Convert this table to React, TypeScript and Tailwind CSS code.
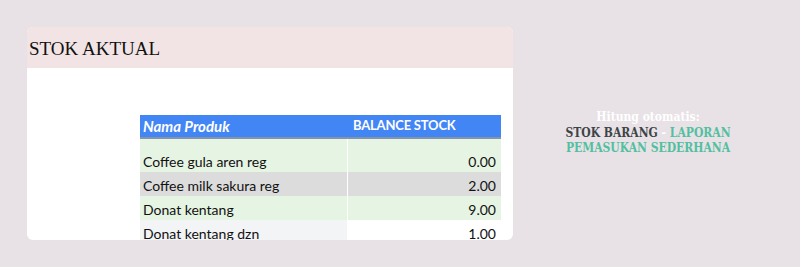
const rows = [
  { name: 'Coffee gula aren reg', qty: '0.00', left: 'bg-[#e6f4e3]', right: 'bg-[#e6f4e3]', first: true },
  { name: 'Coffee milk sakura reg', qty: '2.00', left: 'bg-[#dcdcdc]', right: 'bg-[#dcdcdc]' },
  { name: 'Donat kentang', qty: '9.00', left: 'bg-[#e6f4e3]', right: 'bg-[#e6f4e3]' },
  { name: 'Donat kentang dzn', qty: '1.00', left: 'bg-[#f3f4f6]', right: 'bg-white' },
]

export default function App() {
  return (
    <div className="flex h-[267px] w-[800px] items-start overflow-hidden bg-[#e8e2e6] pl-[27px] pt-[27px]">
      <div className="flex h-[213px] w-[486px] flex-col overflow-hidden rounded-[6px] bg-white">
        <div className="flex h-[41px] shrink-0 items-center bg-[#f2e4e4] pl-[2px] pt-[3px]">
          <h1 className="font-['Liberation_Serif',serif] text-[19px] text-[#111]">STOK AKTUAL</h1>
        </div>

        <div className="pl-[113px] pt-[47px] font-['Lato',sans-serif] text-[#111]">
          <div className="w-[361px]">
            <div className="flex h-[24px] items-center border-b-2 border-[#8494ab] bg-[#4285f4] font-bold text-white">
              <div className="w-[208px] pl-[3px] text-[15px] italic">Nama Produk</div>
              <div className="pl-[5px] text-[13px] tracking-[-0.2px]">BALANCE STOCK</div>
            </div>

            {rows.map((row) => (
              <div key={row.name} className={`flex text-[14px] ${row.first ? 'h-[33px]' : 'h-[24px]'} ${row.left}`}>
                <div className={`flex w-[208px] border-r border-white pl-[3px] ${row.first ? 'items-end' : 'items-center pt-[2px]'} ${row.left}`}>
                  {row.name}
                </div>
                <div className={`flex flex-1 justify-end pr-[5px] ${row.first ? 'items-end' : 'items-center pt-[2px]'} ${row.right}`}>
                  {row.qty}
                </div>
              </div>
            ))}
          </div>
        </div>
      </div>

      <div className="mt-[83px] w-[270px] text-center font-['DejaVu_Serif_Condensed','DejaVu_Serif',serif] text-[12px] font-bold leading-[15.5px]">
        <div className="text-white">Hitung otomatis:</div>
        <div>
          <span className="text-[#3d4447]">STOK BARANG</span>
          <span className="text-white"> - </span>
          <span className="text-[#52bfa0]">LAPORAN</span>
        </div>
        <div className="text-[#52bfa0]">PEMASUKAN SEDERHANA</div>
      </div>
    </div>
  )
}
